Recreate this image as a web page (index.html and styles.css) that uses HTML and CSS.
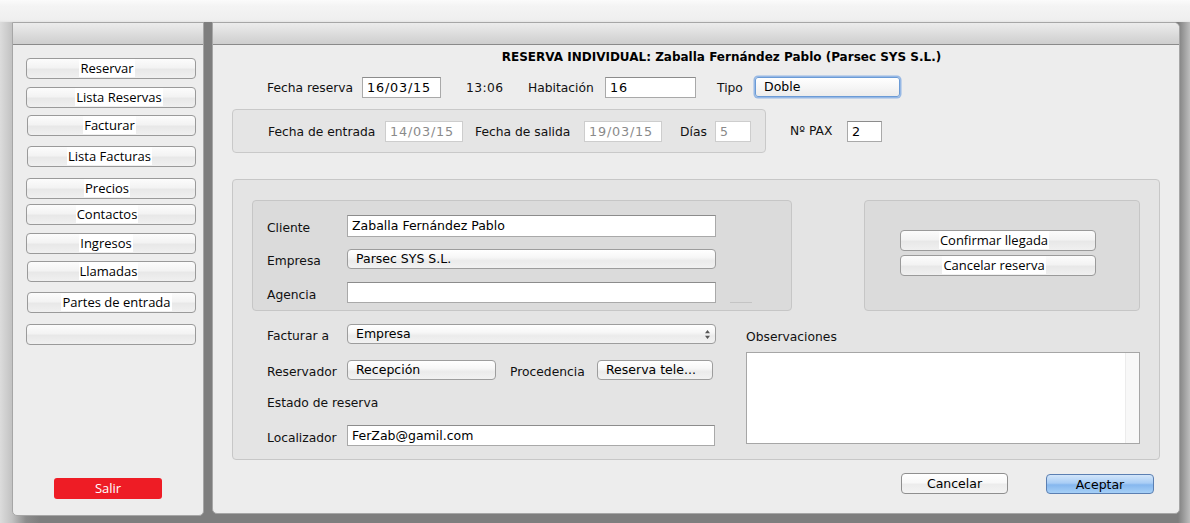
FILE: index.html
```html
<!DOCTYPE html>
<html lang="es">
<head>
<meta charset="utf-8">
<title>Reserva individual</title>
<link rel="stylesheet" href="styles.css">
</head>
<body>
<div class="top-strip"></div>
<div class="desktop">
  <aside class="win side-win">
    <div class="titlebar"></div>
    <div class="side-body">
      <button class="side-btn"><span>Reservar</span></button>
      <button class="side-btn"><span>Lista Reservas</span></button>
      <button class="side-btn"><span>Facturar</span></button>
      <button class="side-btn"><span>Lista Facturas</span></button>
      <button class="side-btn"><span>Precios</span></button>
      <button class="side-btn"><span>Contactos</span></button>
      <button class="side-btn"><span>Ingresos</span></button>
      <button class="side-btn"><span>Llamadas</span></button>
      <button class="side-btn"><span>Partes de entrada</span></button>
      <button class="side-btn"></button>
      <button class="salir">Salir</button>
    </div>
  </aside>
  <main class="win main-win">
    <div class="titlebar"></div>
    <div class="main-body">
      <h1 class="form-title">RESERVA INDIVIDUAL: Zaballa Fernández Pablo (Parsec SYS S.L.)</h1>

      <div class="row row1">
        <span class="lbl w-fr">Fecha reserva</span>
        <span class="field num w79">16/03/15</span>
        <span class="lbl w-time">13:06</span>
        <span class="lbl w-hab">Habitación</span>
        <span class="field num w91">16</span>
        <span class="lbl w-tipo">Tipo</span>
        <span class="select-focus">Doble</span>
      </div>

      <div class="row row2">
        <div class="group dates">
          <span class="lbl w-fe">Fecha de entrada</span>
          <span class="field num disabled w78">14/03/15</span>
          <span class="lbl w-fs">Fecha de salida</span>
          <span class="field num disabled w78">19/03/15</span>
          <span class="lbl w-dias">Días</span>
          <span class="field disabled w36">5</span>
        </div>
        <span class="lbl w-pax">Nº PAX</span>
        <span class="field num w35">2</span>
      </div>

      <section class="group big">
        <div class="big-top">
          <div class="inner client-box">
            <div class="crow">
              <span class="lbl low w80">Cliente</span>
              <span class="field w369 h22">Zaballa Fernández Pablo</span>
            </div>
            <div class="crow">
              <span class="lbl low w80">Empresa</span>
              <span class="popup w369">Parsec SYS S.L.</span>
            </div>
            <div class="crow">
              <span class="lbl low w80">Agencia</span>
              <span class="field w369"></span>
              <span class="tiny-line"></span>
            </div>
          </div>
          <div class="inner action-box">
            <button class="win-btn"><span>Confirmar llegada</span></button>
            <button class="win-btn"><span>Cancelar reserva</span></button>
          </div>
        </div>
        <div class="big-bottom">
          <div class="left-col">
            <div class="lrow r-fact">
              <span class="lbl low w80">Facturar a</span>
              <span class="popup w369">Empresa
                <svg class="updown" width="7" height="11" viewBox="0 0 7 11"><path d="M3.5 1 L6 4.2 L1 4.2 Z M3.5 10 L6 6.8 L1 6.8 Z" fill="#555"/></svg>
              </span>
            </div>
            <div class="lrow r-res">
              <span class="lbl low w80">Reservador</span>
              <span class="popup w149">Recepción</span>
              <span class="lbl low w-proc">Procedencia</span>
              <span class="popup w116">Reserva tele...</span>
            </div>
            <div class="lrow r-est">
              <span class="lbl">Estado de reserva</span>
            </div>
            <div class="lrow r-loc">
              <span class="lbl low w80">Localizador</span>
              <span class="field w368">FerZab@gamil.com</span>
            </div>
          </div>
          <div class="right-col">
            <span class="lbl obs-lbl">Observaciones</span>
            <div class="textarea"><div class="scroll-track"></div></div>
          </div>
        </div>
      </section>

      <div class="dialog-buttons">
        <button class="mac-btn">Cancelar</button>
        <button class="mac-btn primary">Aceptar</button>
      </div>
    </div>
  </main>
</div>
</body>
</html>
```

FILE: styles.css
```css
* { box-sizing: border-box; }

html, body {
  margin: 0;
  width: 1190px;
  height: 523px;
  overflow: hidden;
}

body {
  font-family: "DejaVu Sans", sans-serif;
  font-size: 12.3px;
  color: #111;
  background:
    linear-gradient(to right, #dcdcdc 0, #c2c2c2 12px, #8c8c8c 26px, #7e7e7e 40px, #7e7e7e 1178px, #bdbdbd 1190px);
}

.top-strip {
  height: 22px;
  background: linear-gradient(#fbfbfb 0, #f4f4f4 6px, #efefef 20px, #e4e4e4 22px);
}

.desktop {
  display: flex;
  gap: 8px;
  padding-left: 12px;
  height: 501px;
  align-items: flex-start;
}

.win {
  background: #ededed;
  border: 1px solid #a6a6a6;
  display: flex;
  flex-direction: column;
  overflow: hidden;
}

.titlebar {
  height: 22px;
  flex: none;
  background: linear-gradient(#ececec 0, #e0e0e0 40%, #cecece 100%);
  border-bottom: 1px solid #8a8a8a;
}

/* ---------- sidebar ---------- */
.side-win {
  width: 192px;
  height: 494px;
  border-radius: 0 0 5px 5px;
}

.side-body {
  flex: 1;
  display: flex;
  flex-direction: column;
  padding-left: 13px;
}

.side-btn {
  width: 170px;
  height: 21px;
  margin: 0;
  padding: 0;
  border: 1px solid #9a9a9a;
  border-radius: 4px;
  background: linear-gradient(#fcfcfc 0, #f3f3f3 45%, #e8e8e8 55%, #f0f0f0 100%);
  font-family: "Open Sans", sans-serif;
  font-size: 13px;
  color: #000;
  line-height: 19px;
  text-align: center;
}
.side-btn span { background: #fff; padding: 0 1px; }

.side-btn:nth-child(1) { margin-top: 13px; padding-right: 8px; }
.side-btn:nth-child(2) { margin-top: 8px; padding-left: 16px; }
.side-btn:nth-child(3) { margin-top: 7px; width: 169px; margin-left: 1px; padding-right: 4px; }
.side-btn:nth-child(4) { margin-top: 10px; width: 169px; margin-left: 1px; padding-right: 4px; }
.side-btn:nth-child(5) { margin-top: 11px; padding-right: 8px; }
.side-btn:nth-child(6) { margin-top: 5px; padding-right: 8px; }
.side-btn:nth-child(7) { margin-top: 8px; padding-right: 10px; }
.side-btn:nth-child(8) { margin-top: 7px; width: 169px; margin-left: 1px; padding-right: 6px; }
.side-btn:nth-child(9) { margin-top: 10px; width: 169px; margin-left: 1px; padding-left: 10px; }
.side-btn:nth-child(10) { margin-top: 11px; }

.salir {
  margin-top: auto;
  margin-bottom: 16px;
  align-self: center;
  margin-left: -13px;
  width: 108px;
  height: 21px;
  border: 0;
  border-radius: 3px;
  background: #ee1c25;
  color: #fff;
  font-family: "Open Sans", sans-serif;
  font-size: 13px;
  line-height: 21px;
  padding: 0;
}

/* ---------- main window ---------- */
.main-win {
  width: 968px;
  height: 492px;
  border-radius: 0 6px 5px 5px;
}

.main-body {
  flex: 1;
  padding: 0 20px 0 19px;
  display: flex;
  flex-direction: column;
}

.form-title {
  margin: 5px 0 0;
  padding-left: 52px;
  font-size: 12px;
  font-weight: bold;
  line-height: 15px;
  text-align: center;
  color: #000;
}

.row {
  display: flex;
  align-items: center;
}

.row1 {
  margin-top: 12px;
  padding-left: 35px;
  height: 21px;
}

.lbl { white-space: nowrap; color: #111; flex: none; }
.lbl.low { padding-top: 4px; }

.w-fr { width: 95px; }
.w-time { width: 62px; margin-left: 25px; letter-spacing: 0.4px; }
.w-hab { width: 77px; }
.w-tipo { width: 38px; margin-left: 21px; }

.field {
  flex: none;
  display: block;
  height: 21px;
  background: #fff;
  border: 1px solid #a9a9a9;
  border-top-color: #8c8c8c;
  padding: 0 4px;
  line-height: 19px;
  font-size: 12.5px;
  color: #000;
  white-space: nowrap;
  overflow: hidden;
}
.field.num { letter-spacing: 0.8px; font-size: 12.8px; }
.field.disabled {
  color: #8a8a8a;
  border-color: #cdcdcd;
}
.h22 { height: 22px; line-height: 20px; }

.w79 { width: 79px; }
.w91 { width: 91px; }
.w78 { width: 78px; }
.w36 { width: 36px; }
.w35 { width: 35px; }
.w80 { width: 80px; }
.w369 { width: 369px; }
.w368 { width: 368px; }
.w149 { width: 149px; }
.w116 { width: 116px; }

.select-focus {
  width: 145px;
  height: 20px;
  margin-top: -1px;
  border: 1px solid #6b9bd6;
  border-radius: 3px;
  box-shadow: 0 0 0 1.5px rgba(120, 165, 225, 0.75);
  background: linear-gradient(#ffffff 0, #f6f6f6 50%, #ececec 100%);
  padding-left: 8px;
  line-height: 17px;
  font-size: 12.5px;
  color: #000;
}

.row2 {
  margin-top: 11px;
}

.group {
  background: #e5e5e5;
  border: 1px solid #c9c9c9;
  border-radius: 4px;
}

.dates {
  width: 534px;
  height: 44px;
  display: flex;
  align-items: center;
  padding-left: 35px;
  padding-top: 1px;
}
.w-fe { width: 117px; }
.w-fs { width: 109px; margin-left: 12px; }
.w-dias { width: 35px; margin-left: 18px; }
.w-pax { width: 57px; margin-left: 24px; }

/* ---------- big group ---------- */
.big {
  margin-top: 26px;
  width: 928px;
  height: 281px;
  padding: 20px 19px 0 19px;
  background: #e4e4e4;
  border-color: #c7c7c7;
}

.big-top {
  display: flex;
  gap: 72px;
}

.inner {
  height: 111px;
  background: #dbdbdb;
  border: 1px solid #c6c6c6;
  border-radius: 4px;
}

.client-box {
  width: 540px;
  padding: 14px 0 0 14px;
  display: flex;
  flex-direction: column;
}
.crow { display: flex; align-items: center; }
.crow:nth-child(2) { margin-top: 12px; }
.crow:nth-child(3) { margin-top: 13px; }
.tiny-line {
  width: 22px;
  height: 1px;
  margin-left: 14px;
  align-self: flex-end;
  background: #c4c4c4;
}

.popup {
  flex: none;
  display: block;
  position: relative;
  height: 20px;
  border: 1px solid #9d9d9d;
  border-radius: 4px;
  background: linear-gradient(#ffffff 0, #f7f7f7 40%, #ebebeb 60%, #f2f2f2 100%);
  padding-left: 8px;
  line-height: 17px;
  font-size: 12.5px;
  color: #000;
  white-space: nowrap;
}
.updown {
  position: absolute;
  right: 4px;
  top: 4px;
}

.action-box {
  width: 276px;
  display: flex;
  flex-direction: column;
  padding: 29px 0 0 35px;
  gap: 4px;
}

.win-btn {
  width: 196px;
  height: 21px;
  margin: 0;
  padding: 0 8px 0 0;
  border: 1px solid #9a9a9a;
  border-radius: 4px;
  background: linear-gradient(#fcfcfc 0, #f3f3f3 45%, #e8e8e8 55%, #f0f0f0 100%);
  font-family: "Open Sans", sans-serif;
  font-size: 13px;
  line-height: 19px;
  color: #000;
  text-align: center;
}
.win-btn span { background: #fff; padding: 0 1px; }

.big-bottom {
  display: flex;
  padding-left: 15px;
  gap: 30px;
}

.left-col {
  width: 449px;
  display: flex;
  flex-direction: column;
}
.lrow { display: flex; align-items: center; }
.r-fact { margin-top: 13px; height: 20px; }
.r-res { margin-top: 15px; height: 21px; }
.w-proc { width: 87px; margin-left: 14px; }
.r-est { margin-top: 13px; height: 20px; }
.r-loc { margin-top: 12px; height: 21px; }

.right-col {
  width: 394px;
  display: flex;
  flex-direction: column;
}
.obs-lbl {
  margin-top: 18px;
  line-height: 16px;
}
.textarea {
  margin-top: 7px;
  height: 92px;
  background: #fff;
  border: 1px solid #a6a6a6;
  display: flex;
  justify-content: flex-end;
}
.scroll-track {
  width: 14px;
  background: #f8f8f8;
  border-left: 1px solid #ececec;
}

/* ---------- dialog buttons ---------- */
.dialog-buttons {
  display: flex;
  justify-content: flex-end;
  gap: 38px;
  margin-top: 13px;
  padding-right: 5px;
}

.mac-btn {
  width: 107px;
  height: 21px;
  margin: 0;
  padding: 0;
  border: 1px solid #8f8f8f;
  border-radius: 4px;
  background: linear-gradient(#ffffff 0, #f8f8f8 45%, #ececec 55%, #f3f3f3 100%);
  font-family: "DejaVu Sans", sans-serif;
  font-size: 12.5px;
  color: #000;
  line-height: 19px;
}
.mac-btn.primary {
  width: 108px;
  height: 20px;
  margin-top: 1px;
  border-color: #5b7fb2;
  background: linear-gradient(#d3e6fa 0, #a9cdf5 45%, #86b7ee 55%, #a6d0f7 100%);
}
```
